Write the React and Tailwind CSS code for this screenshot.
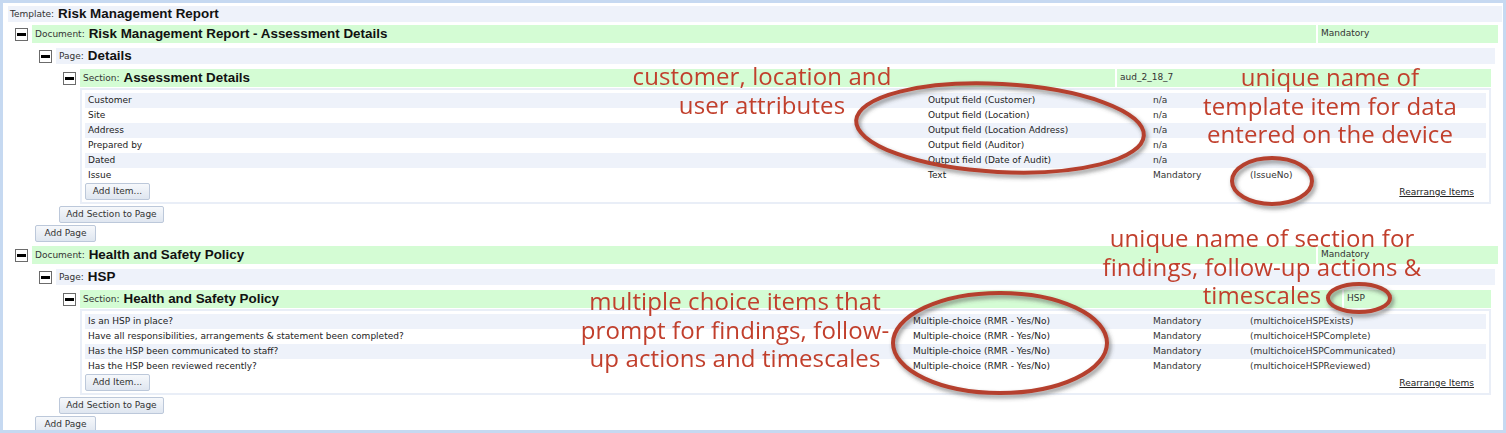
import React from 'react';

const GREEN = 'bg-[#d4fcd4]';
const LAV = 'bg-[#eef2fa]';

const sec1Items = [
  ['Customer', 'Output field (Customer)', 'n/a', ''],
  ['Site', 'Output field (Location)', 'n/a', ''],
  ['Address', 'Output field (Location Address)', 'n/a', ''],
  ['Prepared by', 'Output field (Auditor)', 'n/a', ''],
  ['Dated', 'Output field (Date of Audit)', 'n/a', ''],
  ['Issue', 'Text', 'Mandatory', '(IssueNo)'],
];

const sec2Items = [
  ['Is an HSP in place?', 'Multiple-choice (RMR - Yes/No)', 'Mandatory', '(multichoiceHSPExists)'],
  ['Have all responsibilities, arrangements & statement been completed?', 'Multiple-choice (RMR - Yes/No)', 'Mandatory', '(multichoiceHSPComplete)'],
  ['Has the HSP been communicated to staff?', 'Multiple-choice (RMR - Yes/No)', 'Mandatory', '(multichoiceHSPCommunicated)'],
  ['Has the HSP been reviewed recently?', 'Multiple-choice (RMR - Yes/No)', 'Mandatory', '(multichoiceHSPReviewed)'],
];

function Minus() {
  return (
    <div className="w-[13px] h-[13px] shrink-0 border border-[#6b6b6b] bg-white flex items-center justify-center">
      <div className="w-[9px] h-[3px] bg-black" />
    </div>
  );
}

function Btn({ className, children }) {
  return (
    <div
      className={`h-[17px] flex items-center justify-center rounded-[2px] border border-[#bcc8da] bg-gradient-to-b from-[#f6f8fb] to-[#dfe6f0] text-[9px] text-[#333] ${className}`}
    >
      {children}
    </div>
  );
}

function Header({ label, title, bg, h, extra, extraW }) {
  return (
    <div className={`flex-1 flex gap-[2px] ${h}`}>
      <div className={`flex-1 flex items-center pl-[3px] ${bg}`}>
        <span className="text-[9px] text-[#333] mr-[4px] mt-[2px]">{label}</span>
        <span className="font-['Liberation_Sans',sans-serif] font-bold text-[13.4px] text-[#111]">{title}</span>
      </div>
      {extra !== undefined && (
        <div className={`${extraW} flex items-center pl-[3px] text-[9px] text-[#333] ${bg}`}>{extra}</div>
      )}
    </div>
  );
}

function Items({ rows, labelW, typeW }) {
  return (
    <div className="mt-[1px] border-2 border-[#e9eef7] px-[3px] pt-[3px] pb-[2px]">
      {rows.map((r, i) => (
        <div
          key={i}
          className={`flex h-[15px] items-center pl-[3px] text-[9px] text-[#222] ${i % 2 === 0 ? LAV : 'bg-white'}`}
        >
          <div className={`${labelW} shrink-0`}>{r[0]}</div>
          <div className={`${typeW} shrink-0`}>{r[1]}</div>
          <div className="w-[97px] shrink-0 text-[#333]">{r[2]}</div>
          <div className="flex-1 text-[#333]">{r[3]}</div>
        </div>
      ))}
      <div className="flex items-end justify-between">
        <Btn className="w-[65px]">Add Item...</Btn>
        <span className="text-[9px] text-[#222] underline mr-[12px] mb-[1px]">Rearrange Items</span>
      </div>
    </div>
  );
}

function DocBlock({ title, page, section, sectionId, idW, rows, labelW, typeW, top }) {
  return (
    <div className={`ml-[12px] mr-[5px] ${top}`}>
      <div className="flex items-center gap-[4px]">
        <Minus />
        <Header label="Document:" title={title} bg={GREEN} h="h-[18px]" extra="Mandatory" extraW="w-[180px]" />
      </div>
      <div className="pl-[17px] pr-[3px]">
        <div className="pl-[7px] mt-[5px]">
          <div className="flex items-center gap-[4px]">
            <Minus />
            <Header label="Page:" title={page} bg={LAV} h="h-[16px]" />
          </div>
          <div className="pl-[17px] pr-[4px]">
            <div className="pl-[7px] mt-[5px]">
              <div className="flex items-center gap-[4px]">
                <Minus />
                <Header label="Section:" title={section} bg={GREEN} h="h-[18px]" extra={sectionId} extraW={idW} />
              </div>
              <div className="pl-[17px]">
                <Items rows={rows} labelW={labelW} typeW={typeW} />
              </div>
            </div>
            <Btn className="w-[105px] ml-[3px] mt-[2px]">Add Section to Page</Btn>
          </div>
        </div>
        <Btn className="w-[61px] ml-[3px] mt-[2px]">Add Page</Btn>
      </div>
    </div>
  );
}

function Note({ className, lines }) {
  return (
    <div
      className={`absolute text-center font-['Open_Sans',sans-serif] text-[24px] tracking-[0.1px] leading-[28.5px] text-[#c13f2c] whitespace-nowrap ${className}`}
    >
      {lines.map((l, i) => (
        <div key={i}>{l}</div>
      ))}
    </div>
  );
}

export default function App() {
  return (
    <div className="relative w-[1506px] h-[433px] overflow-hidden bg-[#c6d9f1] pt-[3px] pl-[3px] font-['DejaVu_Sans',sans-serif]">
      <div className="w-[1500px] h-[427px] bg-white pt-[3px] overflow-hidden">
        <div className={`ml-[5px] mr-[1px] h-[16px] flex items-center pl-[2px] ${LAV}`}>
          <span className="text-[9px] text-[#333] mr-[4px] mt-[2px]">Template:</span>
          <span className="font-['Liberation_Sans',sans-serif] font-bold text-[13.4px] text-[#111]">Risk Management Report</span>
        </div>
        <DocBlock
          top="mt-[3px]"
          title="Risk Management Report - Assessment Details"
          page="Details"
          section="Assessment Details"
          sectionId="aud_2_18_7"
          idW="w-[374px]"
          rows={sec1Items}
          labelW="w-[840px]"
          typeW="w-[225px]"
        />
        <DocBlock
          top="mt-[4px]"
          title="Health and Safety Policy"
          page="HSP"
          section="Health and Safety Policy"
          sectionId="HSP"
          idW="w-[147px]"
          rows={sec2Items}
          labelW="w-[825px]"
          typeW="w-[240px]"
        />
      </div>

      <svg className="absolute inset-0 pointer-events-none" width="1506" height="433" viewBox="0 0 1506 433">
        <defs>
          <filter id="sh" x="-20%" y="-20%" width="140%" height="140%">
            <feDropShadow dx="2" dy="3" stdDeviation="2" floodColor="#444" floodOpacity="0.6" />
          </filter>
        </defs>
        <g fill="none" stroke="#b5402d" strokeWidth="4" filter="url(#sh)">
          <ellipse cx="1000" cy="128" rx="144" ry="44" transform="rotate(3 1000 128)" />
          <ellipse cx="1272" cy="181" rx="40" ry="23" />
          <ellipse cx="1359" cy="298" rx="31" ry="14" />
          <ellipse cx="1000" cy="343" rx="107" ry="50" />
        </g>
      </svg>

      <Note className="left-[602px] top-[62px] w-[320px]" lines={['customer, location and', 'user attributes']} />
      <Note className="left-[1180px] top-[63px] w-[300px]" lines={['unique name of', 'template item for data', 'entered on the device']} />
      <Note className="left-[1082px] top-[224px] w-[360px]" lines={['unique name of section for', 'findings, follow-up actions &', 'timescales']} />
      <Note className="left-[565px] top-[287px] w-[340px]" lines={['multiple choice items that', 'prompt for findings, follow-', 'up actions and timescales']} />
    </div>
  );
}
